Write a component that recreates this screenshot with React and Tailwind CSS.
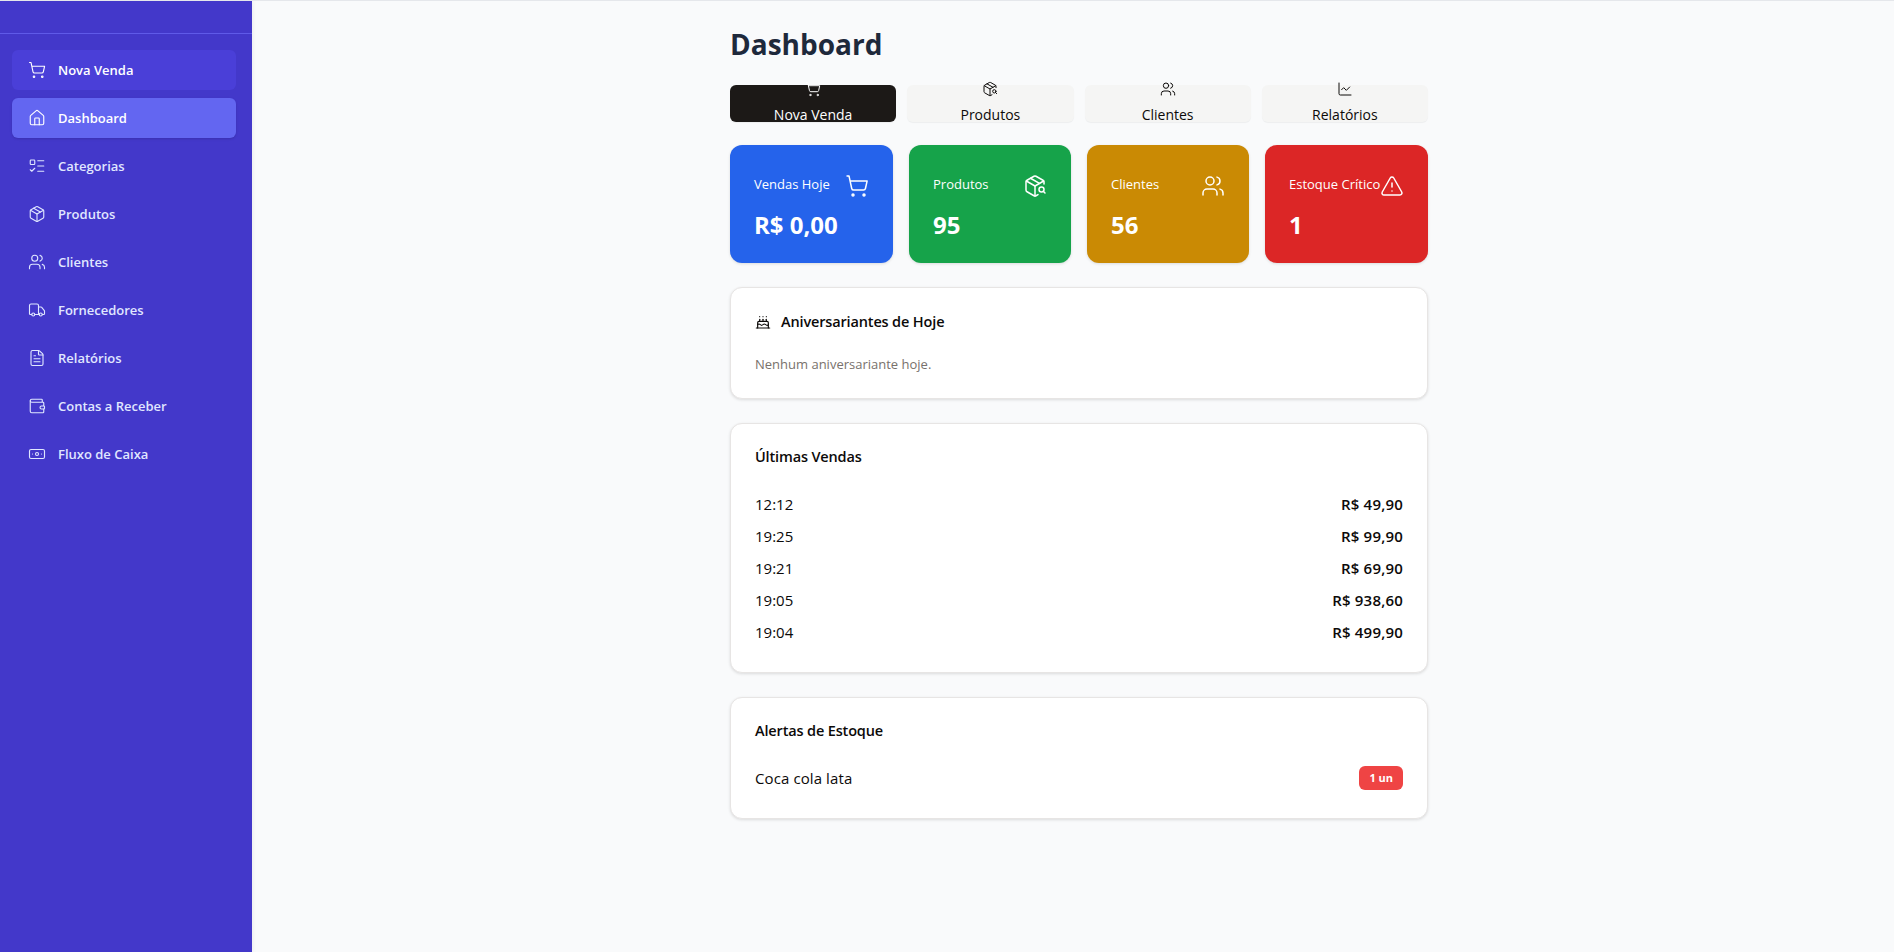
import React from "react";
import { ShoppingCart, House, ListTodo, Package, Users, Truck, FileText, Wallet, Banknote, PackageSearch, ChartLine, TriangleAlert, Cake } from "lucide-react";

const nav = [
  ["Nova Venda", ShoppingCart, "new"],
  ["Dashboard", House, "active"],
  ["Categorias", ListTodo],
  ["Produtos", Package],
  ["Clientes", Users],
  ["Fornecedores", Truck],
  ["Relatórios", FileText],
  ["Contas a Receber", Wallet],
  ["Fluxo de Caixa", Banknote],
];
const quick = [
  ["Nova Venda", ShoppingCart, true],
  ["Produtos", PackageSearch],
  ["Clientes", Users],
  ["Relatórios", ChartLine],
];
const stats = [
  ["Vendas Hoje", "R$ 0,00", ShoppingCart, "bg-[#2563eb]"],
  ["Produtos", "95", PackageSearch, "bg-[#16a34a]"],
  ["Clientes", "56", Users, "bg-[#ca8a04]"],
  ["Estoque Crítico", "1", TriangleAlert, "bg-[#dc2626]"],
];
const sales = [
  ["12:12", "R$ 49,90"],
  ["19:25", "R$ 99,90"],
  ["19:21", "R$ 69,90"],
  ["19:05", "R$ 938,60"],
  ["19:04", "R$ 499,90"],
];

function Panel({ className = "", children }) {
  return <section className={"bg-white rounded-[12px] border border-[#e7e5e4] shadow-[0_1px_3px_rgba(0,0,0,0.12)] px-[24px] " + className}>{children}</section>;
}

export default function App() {
  return (
    <div className="flex h-[952px] w-full overflow-hidden bg-[#f9fafb] border-t border-[#e5e7eb] font-['Open_Sans','Noto_Sans',sans-serif]">
      <aside className="w-[252px] shrink-0 bg-[#4338ca] shadow-[1px_0_4px_rgba(0,0,0,0.06)]">
        <div className="h-[33px] border-b border-[#5f5ae8]" />
        <nav className="pl-[12px] pr-[16px] pt-[16px] flex flex-col gap-[8px]">
          {nav.map(([label, Icon, kind]) => (
            <div
              key={label}
              className={
                "h-[40px] rounded-[6px] flex items-center pl-[16px] gap-[12px] text-[13px] font-semibold " +
                (kind === "active" ? "bg-[#6366f1] text-white shadow-sm" : kind === "new" ? "bg-[#4a3fd8] text-white" : "text-[#e0e7ff]")
              }
            >
              <Icon size={18} strokeWidth={1.5} className="shrink-0" />
              <span className="pt-[1px]">{label}</span>
            </div>
          ))}
        </nav>
      </aside>
      <main className="flex-1 pl-[478px]">
        <div className="w-[698px]">
          <h1 className="mt-[23px] h-[40px] text-[28px] leading-[40px] font-bold text-[#1e293b]">Dashboard</h1>
          <div className="mt-[21px] grid grid-cols-4 gap-[11px]">
            {quick.map(([label, Icon, dark]) => (
              <div key={label} className={"h-[37px] pb-[2px] rounded-[6px] flex flex-col items-center justify-center gap-[8px] text-[14px] font-medium shadow-[0_1px_1px_rgba(0,0,0,0.05)] " + (dark ? "bg-[#1c1917] text-white" : "bg-[#f5f5f4] text-[#0c0a09]")}>
                <Icon size={16} strokeWidth={1.5} className="shrink-0" />
                <span className="leading-[20px]">{label}</span>
              </div>
            ))}
          </div>
          <div className="mt-[23px] grid grid-cols-[163px_162px_162px_163px] gap-[16px]">
            {stats.map(([label, value, Icon, bg]) => (
              <div key={label} className={"h-[118px] rounded-[12px] text-white px-[24px] pt-[27px] shadow-[0_1px_3px_rgba(0,0,0,0.12)] " + bg}>
                <div className="flex items-start justify-between">
                  <span className="text-[13px] font-medium leading-[24px] whitespace-nowrap">{label}</span>
                  <Icon size={24} strokeWidth={1.5} className="shrink-0 mt-[2px]" />
                </div>
                <div className="mt-[11px] text-[24px] font-bold leading-[32px]">{value}</div>
              </div>
            ))}
          </div>
          <Panel className="mt-[24px] h-[112px] pt-[23px]">
            <h2 className="flex items-center gap-[10px] text-[14.5px] tracking-[-0.15px] font-semibold leading-[22px] text-[#0c0a09]">
              <Cake size={16} strokeWidth={1.75} />
              Aniversariantes de Hoje
            </h2>
            <p className="mt-[21px] text-[13px] leading-[20px] text-[#78716c]">Nenhum aniversariante hoje.</p>
          </Panel>
          <Panel className="mt-[24px] h-[250px] pt-[22px]">
            <h2 className="text-[14.5px] tracking-[-0.15px] font-semibold leading-[22px] text-[#0c0a09]">Últimas Vendas</h2>
            <div className="mt-[20px] flex flex-col">
              {sales.map(([t, v]) => (
                <div key={t} className="h-[32px] flex items-center justify-between text-[15px] text-[#0c0a09]">
                  <span>{t}</span>
                  <span className="font-semibold tracking-[0.2px]">{v}</span>
                </div>
              ))}
            </div>
          </Panel>
          <Panel className="mt-[24px] h-[122px] pt-[22px]">
            <h2 className="text-[14.5px] tracking-[-0.15px] font-semibold leading-[22px] text-[#0c0a09]">Alertas de Estoque</h2>
            <div className="mt-[24px] flex items-center justify-between text-[15px] text-[#0c0a09]">
              <span className="tracking-[0.1px]">Coca cola lata</span>
              <span className="h-[24px] px-[10px] rounded-[6px] bg-[#ef4444] text-white text-[11px] font-bold flex items-center">1 un</span>
            </div>
          </Panel>
        </div>
      </main>
    </div>
  );
}
